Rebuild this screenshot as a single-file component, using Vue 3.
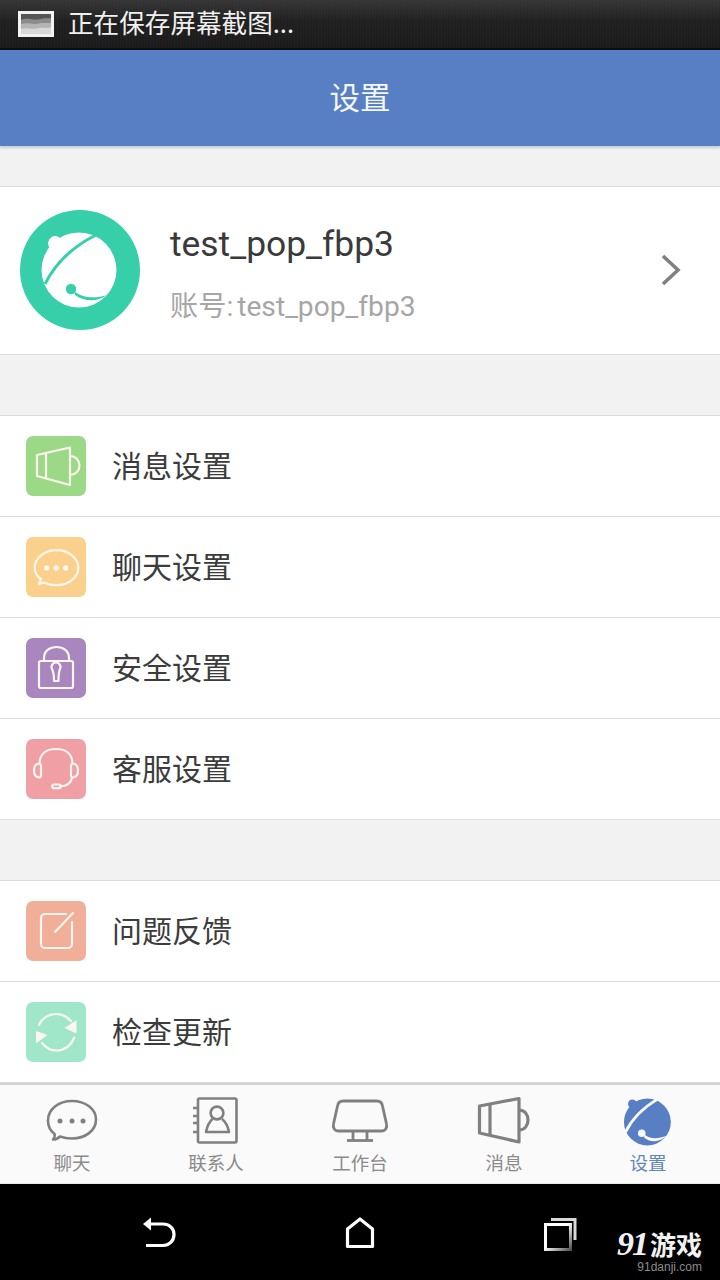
<script setup>
const groupA = [
  { label: '消息设置', color: '#9bd986', s: 'M11 19 L44 11.5 V49 L11 40 Z M20 17 V42 M44 20 A9.5 9.5 0 0 1 44 39', f: '' },
  { label: '聊天设置', color: '#fbd08c', s: 'M15 42 C9.5 38.5 8.7 34.5 8.7 30.7 C8.7 21 18.5 13.2 30.5 13.2 C42.5 13.2 52.3 21 52.3 30.7 C52.3 40.4 42.5 48.2 30.5 48.2 C26 48.2 22 47.4 18 45.5 L13 47 Z', f: 'M18 31a2.7 2.7 0 1 0 5.4 0a2.7 2.7 0 1 0-5.4 0M27.5 31a2.7 2.7 0 1 0 5.4 0a2.7 2.7 0 1 0-5.4 0M37 31a2.7 2.7 0 1 0 5.4 0a2.7 2.7 0 1 0-5.4 0' },
  { label: '安全设置', color: '#a986be', s: 'M15 23 H45 A2 2 0 0 1 47 25 V48 A2 2 0 0 1 45 50 H15 A2 2 0 0 1 13 48 V25 A2 2 0 0 1 15 23 Z M18 22 V20 C18 13 23.5 9 30.5 9 C37.5 9 43 13 43 20 V22 M26 31 A4.5 4.5 0 1 1 34 31 C33 33 32.5 36 32.5 43 H28 C28 36 27 33 26 31 Z', f: '' },
  { label: '客服设置', color: '#f0a0a5', s: 'M13.5 25 C13.5 15 20 10 30 10 C40 10 46.5 15 46.5 25 M13 24.5 C9.5 25 8 28 8 31.5 C8 35 9.5 38 13 38.5 C14.5 38.5 15 37.5 15 36 V27 C15 25.5 14.5 24.5 13 24.5 Z M47 24.5 C50.5 25 52 28 52 31.5 C52 35 50.5 38 47 38.5 C45.5 38.5 45 37.5 45 36 V27 C45 25.5 45.5 24.5 47 24.5 Z M46 39 C45 44 41 47 34 47.5 M28 45.5 H33 A1.8 1.8 0 0 1 33 49.2 H28 A1.8 1.8 0 0 1 28 45.5 Z', f: '' }
]
const groupB = [
  { label: '问题反馈', color: '#f1ae98', s: 'M40 13 H19 A4 4 0 0 0 15 17 V43 A4 4 0 0 0 19 47 H42 A4 4 0 0 0 46 43 V21 M29 31 L47 12', f: '' },
  { label: '检查更新', color: '#a0e6c8', s: 'M13 23 C16 16 23 12 30 12 C36 12 41 14.5 45 19 M48 36 C45 44 38 48.5 30.5 48.5 C25 48.5 20 46 16 41', f: 'M50.5 18 V31.5 L38.5 26 ZM10 29 L21.5 33 L10 41.5 Z' }
]
const tabs = [
  { label: '聊天', key: 'chat' },
  { label: '联系人', key: 'contacts' },
  { label: '工作台', key: 'desk' },
  { label: '消息', key: 'notice' },
  { label: '设置', key: 'settings', active: true }
]
</script>

<template>
  <div class="page">
    <div class="status">
      <svg class="shot" viewBox="0 0 36 26" width="36" height="26">
        <rect x="1.5" y="1.5" width="33" height="23" fill="#555" stroke="#f2f2f2" stroke-width="3" />
        <path d="M3 9 C10 6 16 10 22 8 C27 6.5 30 8 33 7 V23 H3 Z" fill="#8b8b8b" />
        <path d="M3 13 C9 11 15 14 21 12.5 C26 11 30 13 33 11.5 V23 H3 Z" fill="#b4b4b4" />
        <path d="M3 18 C9 16 14 19 21 17 C26 16 30 18 33 16 V23 H3 Z" fill="#d8d8d8" />
      </svg>
      <span class="status-text">正在保存屏幕截图...</span>
    </div>
    <header class="head"><span class="head-text">设置</span></header>

    <main class="content">
      <section class="profile">
        <svg class="avatar" viewBox="0 0 120 120">
          <circle cx="60" cy="60" r="60" fill="#36cfa9" />
          <circle cx="59" cy="60" r="37.5" fill="#fff" />
          <circle cx="35" cy="33" r="7" fill="#fff" />
          <path d="M33 25.5 A8 8 0 0 0 28 31" fill="none" stroke="#36cfa9" stroke-width="1.2" />
          <path d="M25 74 C36 52 54 36 76 25" fill="none" stroke="#36cfa9" stroke-width="3" />
          <circle cx="51" cy="79" r="5.2" fill="#36cfa9" />
          <path d="M54 81 C62 88 75 89 87 85 C79 91 66 93 55 85 Z" fill="#36cfa9" />
        </svg>
        <div class="who">
          <div class="name">test_pop_fbp3</div>
          <div class="account">账号: test_pop_fbp3</div>
        </div>
        <svg class="chev" viewBox="0 0 22 34"><path d="M3 3 L18 17 L3 31" fill="none" stroke="#808080" stroke-width="3.6" /></svg>
      </section>

      <section class="group">
        <div v-for="r in groupA" :key="r.label" class="row">
          <div class="tile" :style="{ background: r.color }">
            <svg viewBox="0 0 60 60" width="60" height="60">
              <path :d="r.s" fill="none" stroke="#fdf6ee" stroke-width="2.2" stroke-linejoin="round" stroke-linecap="round" />
              <path v-if="r.f" :d="r.f" fill="#fdf6ee" />
            </svg>
          </div>
          <span class="row-text">{{ r.label }}</span>
        </div>
      </section>

      <section class="group">
        <div v-for="r in groupB" :key="r.label" class="row">
          <div class="tile" :style="{ background: r.color }">
            <svg viewBox="0 0 60 60" width="60" height="60">
              <path :d="r.s" fill="none" stroke="#fdf6ee" stroke-width="2.2" stroke-linejoin="round" stroke-linecap="round" />
              <path v-if="r.f" :d="r.f" fill="#fdf6ee" />
            </svg>
          </div>
          <span class="row-text">{{ r.label }}</span>
        </div>
      </section>
    </main>

    <nav class="tabs">
      <div v-for="t in tabs" :key="t.key" class="tab" :class="{ on: t.active }">
        <svg class="tab-icon" viewBox="0 0 60 50" width="60" height="50">
          <g v-if="t.key === 'chat'" fill="none" stroke="#808080" stroke-width="2.6" stroke-linejoin="round">
            <path d="M11 43.5 C13 41 13 39.5 12.5 38 C8 34.5 6 29.5 6 24.5 C6 13 16.5 5 30 5 C43.5 5 54 13 54 23.5 C54 34.5 43.5 42.5 30 42.5 C25.5 42.5 21.5 41.8 18 40.5 C16 42.5 14 43.5 11 43.5 Z" />
            <g fill="#808080" stroke="none">
              <circle cx="18" cy="25" r="2.5" /><circle cx="30" cy="25" r="2.5" /><circle cx="41" cy="25" r="2.5" />
            </g>
          </g>
          <g v-else-if="t.key === 'contacts'" fill="none" stroke="#808080" stroke-width="2.6" stroke-linejoin="round">
            <rect x="12" y="2.5" width="38.5" height="44" rx="1.5" />
            <path d="M7 12 H12 M7 20 H12 M7 27 H12 M7 36 H12" stroke-width="2.4" />
            <circle cx="31" cy="17" r="6.4" />
            <path d="M26.5 23 C23 26 21 31 20 36 H43 C42 31 40 26 36 23" />
          </g>
          <g v-else-if="t.key === 'desk'" fill="none" stroke="#808080" stroke-width="2.8" stroke-linejoin="round">
            <path d="M13 5 H47 C50 5 52 7 52.5 10 L56.5 28 C57.5 32 55 35 52 35 H8 C5 35 2.5 32 3.5 28 L7.5 10 C8 7 10 5 13 5 Z" />
            <path d="M23 35 V44 M37 35 V44" />
            <path d="M17 44.5 H43" />
          </g>
          <g v-else-if="t.key === 'notice'" fill="none" stroke="#808080" stroke-width="3.2" stroke-linejoin="round">
            <path d="M5.5 10 L45 2.5 V46 L5.5 37 Z" />
            <path d="M16 9 V39" />
            <path d="M45 14 C57 14 57 34 45 34" />
          </g>
          <svg v-else x="5" y="1" width="50" height="50" viewBox="20 20 80 80">
            <circle cx="59" cy="60" r="37.5" fill="#587fc4" />
            <circle cx="35" cy="31" r="7" fill="#587fc4" />
            <path d="M24 76 C36 52 54 36 76 23" fill="none" stroke="#fafafa" stroke-width="4.5" />
            <circle cx="50" cy="78" r="6" fill="#fafafa" />
            <path d="M54 80 C62 87 75 88 90 82 C80 92 65 94 54 85 Z" fill="#fafafa" />
          </svg>
        </svg>
        <span class="tab-text">{{ t.label }}</span>
      </div>
    </nav>

    <footer class="nav">
      <div class="nav-btn">
        <svg viewBox="0 0 40 36" width="40" height="36" fill="none" stroke="#fff" stroke-width="3.2">
          <path d="M8 8 H23 C29 8 34 12 34 18.5 C34 25 29 29.5 23 29.5 H6" />
          <path d="M3 8 L11 1.5 V14.5 Z" fill="#fff" stroke="none" />
        </svg>
      </div>
      <div class="nav-btn">
        <svg viewBox="0 0 40 36" width="40" height="36" fill="none" stroke="#fff" stroke-width="3.2" stroke-linejoin="round">
          <path d="M7.5 30.5 V13 L20 3 L32.5 13 V30.5 Z" />
        </svg>
      </div>
      <div class="nav-btn">
        <svg viewBox="0 0 40 36" width="40" height="36" fill="none" stroke-width="3">
          <defs>
            <linearGradient id="recent" x1="0" y1="0" x2="1" y2="1">
              <stop offset="0.45" stop-color="#fff" />
              <stop offset="1" stop-color="#555" />
            </linearGradient>
          </defs>
          <path d="M11 3.5 H35 V24" stroke="#d9d9d9" />
          <rect x="5.5" y="8.5" width="25" height="25" fill="#000" stroke="url(#recent)" />
        </svg>
      </div>
      <div class="mark">
        <div class="mark-big"><span class="mark-num">91</span>游戏</div>
        <div class="mark-url">91danji.com</div>
      </div>
    </footer>
  </div>
</template>

<style>
html, body { margin: 0; background: #000; }
</style>

<style scoped>
.page {
  width: 720px;
  height: 1280px;
  display: flex;
  flex-direction: column;
  overflow: hidden;
  font-family: "Roboto", "Noto Sans CJK SC", sans-serif;
  background: #f2f2f2;
}
.status {
  height: 50px;
  box-sizing: border-box;
  flex: none;
  display: flex;
  align-items: center;
  padding-left: 18px;
  gap: 14px;
  border-bottom: 2px solid #0c0c12;
  background:
    repeating-linear-gradient(90deg, rgba(255,255,255,.015) 0 1px, transparent 1px 3px),
    linear-gradient(#363636, #202020 45%, #1b1b1b);
}
.shot { display: block; flex: none; }
.status-text {
  font-family: "Noto Sans CJK SC", sans-serif;
  font-size: 25.6px;
  line-height: 30px;
  color: #f0f0f0;
  margin-bottom: 4px;
}
.head {
  height: 96px;
  flex: none;
  display: flex;
  align-items: center;
  justify-content: center;
  background: #587fc4;
  box-shadow: 0 2px 2px rgba(120, 140, 170, .35);
  position: relative;
}
.head-text {
  color: #f4f7fb;
  font-family: "Noto Sans CJK SC", sans-serif;
  font-size: 30.5px;
  line-height: 40px;
  margin-bottom: 4px;
}
.content {
  flex: 1;
  min-height: 0;
  padding-top: 40px;
  display: flex;
  flex-direction: column;
  gap: 60px;
  overflow: hidden;
}
.profile {
  height: 169px;
  box-sizing: border-box;
  flex: none;
  display: flex;
  align-items: center;
  padding-left: 20px;
  background: #fff;
  border-top: 1px solid #dcdcdc;
  border-bottom: 1px solid #dcdcdc;
}
.avatar {
  width: 120px;
  height: 120px;
  flex: none;
  margin-bottom: 2px;
}
.who {
  margin-left: 30px;
  flex: 1;
  margin-top: 6px;
}
.name {
  font-size: 35.4px;
  line-height: 42px;
  color: #3a3a3a;
  margin-top: -1px;
}
.account {
  margin-top: 26px;
  font-size: 28.2px;
  line-height: 32px;
  word-spacing: -3px;
  color: #a6a6a6;
}
.chev {
  width: 22px;
  height: 34px;
  margin-right: 38px;
  margin-bottom: 2px;
  flex: none;
}
.group {
  flex: none;
  background: #fff;
  border-top: 1px solid #dcdcdc;
}
.row {
  height: 101px;
  box-sizing: border-box;
  display: flex;
  align-items: center;
  padding-left: 26px;
  border-bottom: 1px solid #dcdcdc;
}
.tile {
  width: 60px;
  height: 60px;
  border-radius: 7px;
  flex: none;
}
.tile svg { display: block; }
.row-text {
  margin-left: 26px;
  margin-bottom: 4px;
  font-family: "Noto Sans CJK SC", sans-serif;
  font-size: 30px;
  line-height: 40px;
  color: #3c3c3c;
}
.tabs {
  height: 101px;
  flex: none;
  display: grid;
  grid-template-columns: repeat(5, 144px);
  box-sizing: border-box;
  background: #fafafa;
  border-top: 2px solid #d2d2d2;
  border-bottom: 1px solid #e8e8e8;
}
.tab {
  display: flex;
  flex-direction: column;
  align-items: center;
  padding-top: 11px;
}
.tab-icon { display: block; flex: none; }
.tab-text {
  margin-top: 4px;
  font-family: "Noto Sans CJK SC", sans-serif;
  font-size: 18.5px;
  line-height: 24px;
  color: #8a8a8a;
}
.tab.on .tab-text { color: #5f86c0; }
.nav {
  height: 96px;
  flex: none;
  box-sizing: border-box;
  background: #000;
  display: flex;
  justify-content: center;
  padding-top: 32px;
  position: relative;
}
.nav-btn {
  width: 200px;
  height: 36px;
  display: flex;
  justify-content: center;
}
.mark {
  position: absolute;
  right: 18px;
  top: 45px;
  text-align: right;
}
.mark-big {
  height: 29px;
  display: flex;
  align-items: center;
  justify-content: flex-end;
  font-family: "Noto Sans CJK SC", sans-serif;
  font-weight: 700;
  font-size: 26px;
  line-height: 29px;
  color: #f2f2f2;
  white-space: nowrap;
}
.mark-num {
  font-family: "Liberation Serif", serif;
  font-style: italic;
  font-size: 34px;
  line-height: 29px;
  letter-spacing: -2px;
  margin-right: 3px;
}
.mark-url {
  font-family: "Liberation Sans", sans-serif;
  font-size: 12px;
  line-height: 14px;
  margin-top: 2px;
  color: #8c8c8c;
}
</style>
